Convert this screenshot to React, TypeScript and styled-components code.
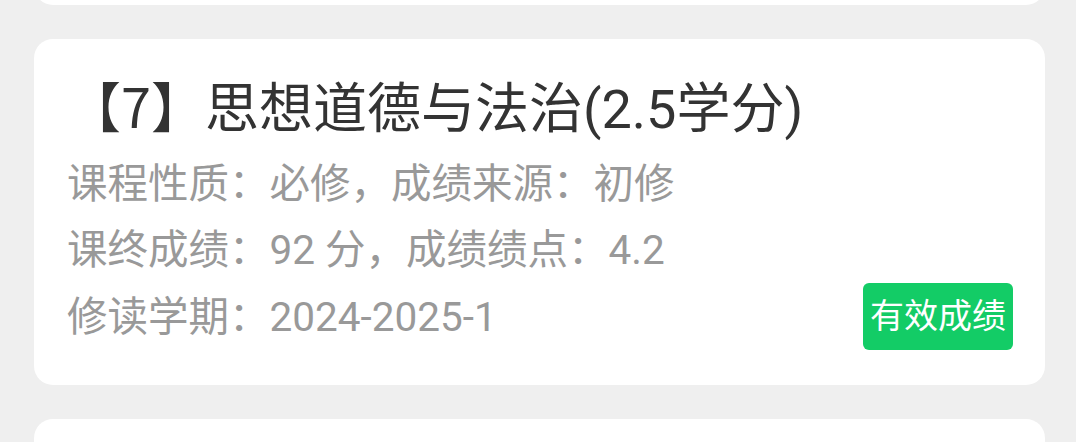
import React from "react";
import styled, {createGlobalStyle} from "styled-components";

const GlobalStyle = createGlobalStyle`
  html, body {
    margin: 0;
    padding: 0;
    background: #efefef;
  }
  body {
    font-family: Roboto, "Noto Sans CJK SC", "Noto Sans", sans-serif;
  }
`;

const Page = styled.div`
  height: 442px;
  overflow: hidden;
  background: #efefef;
  padding: 0 31px 0 34px;
`;

// the list is scrolled: the card before the visible one only shows its bottom edge
const List = styled.div<{ $scroll: number }>`
  display: flex;
  flex-direction: column;
  gap: 34px;
  margin-top: ${p => -p.$scroll}px;
`;

const Card = styled.div`
  background: #fff;
  border-radius: 19px;
  padding: 30px 32px 35px 33px;
`;

const Title = styled.div`
  font-size: 54px;
  line-height: 82px;
  color: #333;
  white-space: nowrap;
`;

// the index is set in the CJK font, digit included
const Index = styled.span`
  font-family: "Noto Sans CJK SC", sans-serif;
  line-height: 1;
`;

const Row = styled.div`
  display: flex;
  align-items: center;
  justify-content: space-between;
  font-size: 40.5px;
  line-height: 66px;
  color: #999;
  white-space: nowrap;
`;

const Badge = styled.span<{ $valid: boolean }>`
  display: inline-block;
  height: 67px;
  line-height: 67px;
  padding: 0 7px;
  border-radius: 6px;
  font-size: 34px;
  color: #fff;
  background: ${p => (p.$valid ? "#13cc66" : "#f5a623")};
`;

interface Course {
    no: number;
    name: string;
    credit: number;
    kind: string;
    source: string;
    score: number;
    gpa: string;
    term: string;
    valid: boolean;
}

const courses: Course[] = [
    {no: 6, name: "中国近现代史纲要", credit: 3, kind: "必修", source: "初修", score: 88, gpa: "3.8", term: "2024-2025-1", valid: true},
    {no: 7, name: "思想道德与法治", credit: 2.5, kind: "必修", source: "初修", score: 92, gpa: "4.2", term: "2024-2025-1", valid: true},
    {no: 8, name: "大学英语(一)", credit: 3, kind: "必修", source: "初修", score: 85, gpa: "3.5", term: "2024-2025-1", valid: true},
];

const CourseCard = ({c}: { c: Course }) => (
    <Card>
        <Title><Index>【{c.no}】</Index>{c.name}({c.credit}学分)</Title>
        <Row>课程性质：{c.kind}，成绩来源：{c.source}</Row>
        <Row>课终成绩：{c.score} 分，成绩绩点：{c.gpa}</Row>
        <Row>
            <span>修读学期：{c.term}</span>
            <Badge $valid={c.valid}>{c.valid ? "有效成绩" : "无效成绩"}</Badge>
        </Row>
    </Card>
);

export default function App() {
    return <>
        <GlobalStyle/>
        <Page>
            <List $scroll={341}>
                {courses.map(c => <CourseCard key={c.no} c={c}/>)}
            </List>
        </Page>
    </>;
}
